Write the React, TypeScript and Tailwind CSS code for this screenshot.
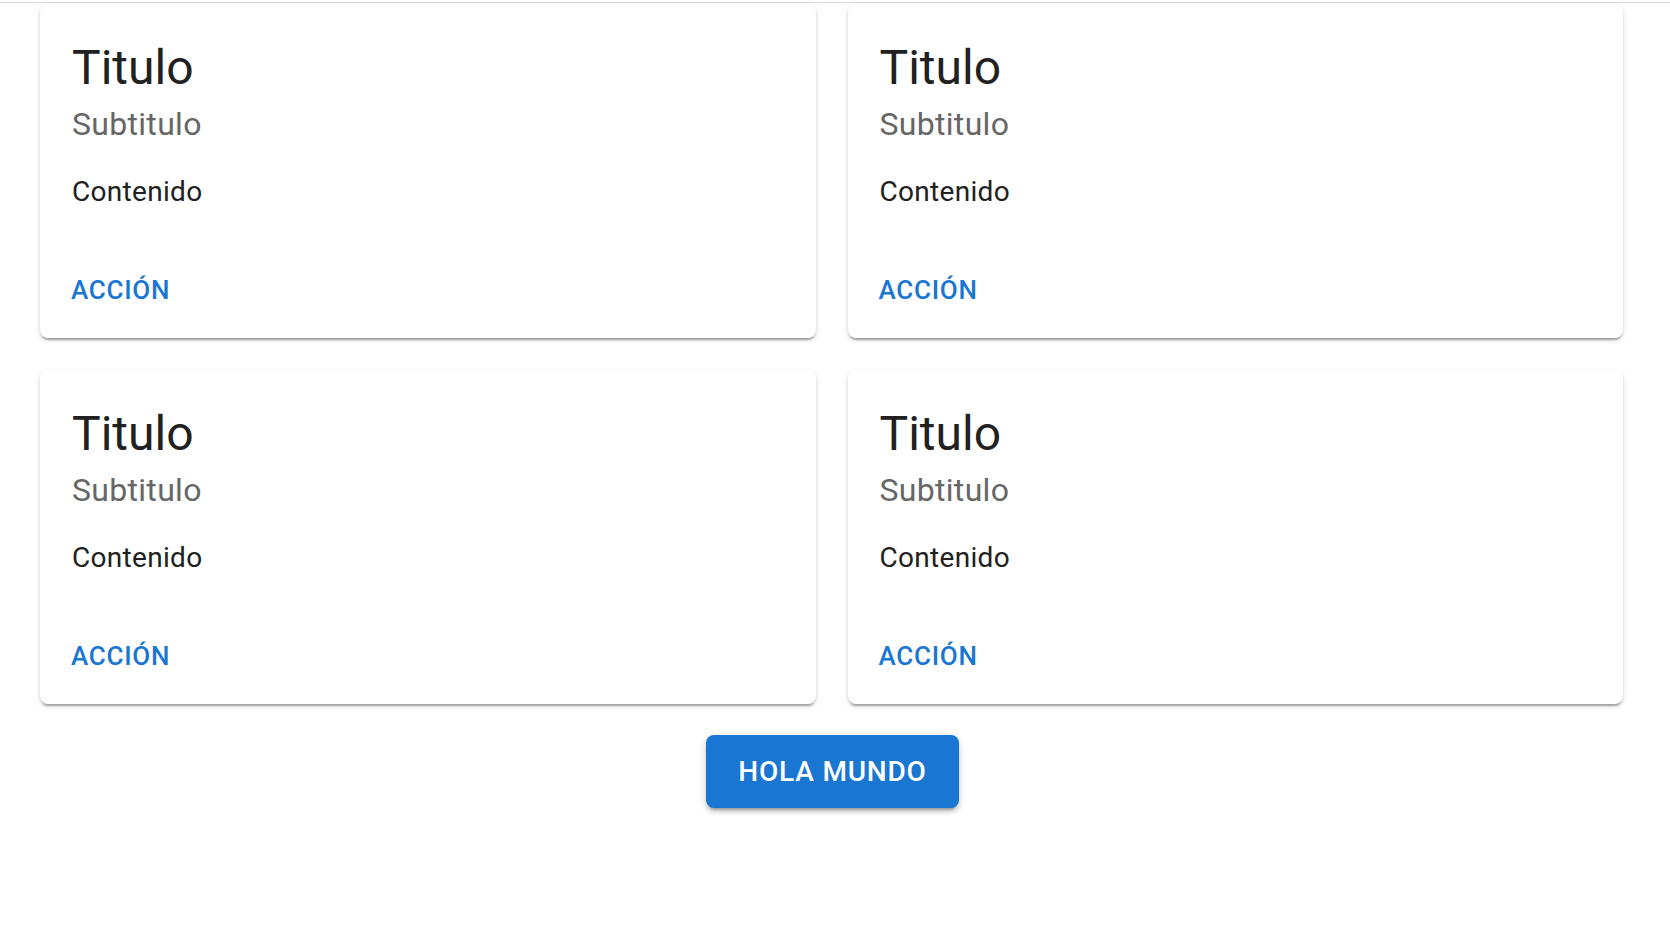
import React from "react";

function Card() {
  return (
    <div className="bg-white rounded-[8px] shadow-[0_4px_2px_-2px_rgba(0,0,0,0.2),0_2px_2px_0_rgba(0,0,0,0.14),0_2px_6px_0_rgba(0,0,0,0.12)] h-[334px] flex flex-col">
      <div className="px-[32px] pt-[32px] pb-[32px]">
        <div className="text-[48px] leading-[64px] text-[#212121] font-normal">Titulo</div>
        <div className="text-[32px] leading-[48px] text-[#666666] mb-[24px] tracking-[0.3px]">Subtitulo</div>
        <div className="text-[28px] leading-[40px] text-[#212121] tracking-[0.3px]">Contenido</div>
      </div>
      <div className="px-[16px] pb-[17px] mt-auto flex">
        <button className="px-[15px] py-[8px] text-[26px] leading-[45.5px] font-medium text-[#1976d2] uppercase tracking-[0.75px] rounded-[8px]">
          Acción
        </button>
      </div>
    </div>
  );
}

export default function App() {
  return (
    <div className="w-[1670px] h-[928px] bg-white overflow-hidden" style={{ fontFamily: "Roboto, 'Liberation Sans', sans-serif" }}>
      <div className="h-[2px] bg-white" />
      <div className="h-[1px] bg-[#dadada]" />
      <div className="pl-[40px] pr-[47px] pt-[1px]">
        <div className="grid grid-cols-2 gap-[32px]">
          <Card />
          <Card />
          <Card />
          <Card />
        </div>
        <div className="flex justify-center mt-[31px] pl-[2px]">
          <button className="bg-[#1976d2] text-white text-[28px] leading-[49px] font-medium uppercase tracking-[0.8px] px-[32px] py-[12px] rounded-[8px] shadow-[0_6px_2px_-4px_rgba(0,0,0,0.2),0_4px_4px_0_rgba(0,0,0,0.14),0_2px_10px_0_rgba(0,0,0,0.12)]">
            Hola Mundo
          </button>
        </div>
      </div>
    </div>
  );
}
